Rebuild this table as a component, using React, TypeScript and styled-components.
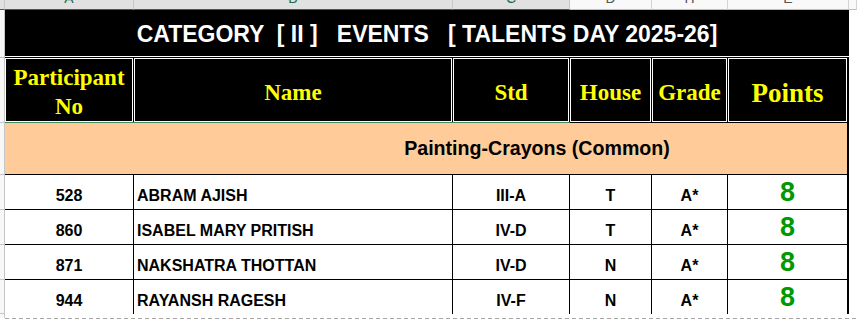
import styled, { createGlobalStyle } from "styled-components";

const GlobalStyle = createGlobalStyle`
  html, body {
    margin: 0;
    padding: 0;
    background: #ffffff;
  }
  body {
    font-family: "Liberation Sans", Arial, sans-serif;
    overflow: hidden;
  }
`;

// column widths incl. right border (A, B, C, D, H, E)
const COLS = [129, 319, 117, 82, 76, 121];
const LETTERS = ["A", "B", "C", "D", "H", "E"];
const SELECTED = 3; // A..C are selected in the sheet

const ROW_TICKS = [48, 65, 52, 35, 35, 35, 34];

const rows = [
  { no: "528", name: "ABRAM AJISH", std: "III-A", house: "T", grade: "A*", points: "8" },
  { no: "860", name: "ISABEL MARY PRITISH", std: "IV-D", house: "T", grade: "A*", points: "8" },
  { no: "871", name: "NAKSHATRA THOTTAN", std: "IV-D", house: "N", grade: "A*", points: "8" },
  { no: "944", name: "RAYANSH RAGESH", std: "IV-F", house: "N", grade: "A*", points: "8" },
];

const Sheet = styled.div`
  width: 857px;
  height: 319px;
  display: flex;
  flex-direction: column;
  overflow: hidden;
`;

const ColumnBar = styled.div`
  display: flex;
  height: 10px;
`;

const ColHead = styled.div<{ $w?: number; $active?: boolean; $grow?: boolean }>`
  box-sizing: border-box;
  width: ${(p) => (p.$w ? `${p.$w}px` : "auto")};
  flex: ${(p) => (p.$grow ? "1" : "none")};
  height: 10px;
  overflow: hidden;
  display: flex;
  align-items: flex-end;
  justify-content: center;
  padding-bottom: 4px;
  font-size: 14px;
  line-height: 14px;
  color: ${(p) => (p.$active ? "#1e6b41" : "#555555")};
  background: ${(p) => (p.$active ? "#e1e1e1" : "#f9f9f9")};
  border-right: 1px solid ${(p) => (p.$active ? "#c8c8c8" : "#d4d4d4")};
  border-bottom: 1px solid ${(p) => (p.$active ? "#217346" : "#bdbdbd")};
`;

const Corner = styled(ColHead)`
  width: 5px;
  border-bottom-color: #217346;
`;

const Body = styled.div`
  display: flex;
  flex: 1;
`;

const RowHeads = styled.div`
  box-sizing: border-box;
  width: 5px;
  display: flex;
  flex-direction: column;
  border-right: 1px solid #c6c6c6;
  background: #f7f7f7;
`;

const RowTick = styled.div<{ $h: number }>`
  box-sizing: border-box;
  height: ${(p) => p.$h}px;
  border-bottom: 1px solid #c6c6c6;
`;

const Table = styled.div`
  width: 844px;
  display: flex;
  flex-direction: column;
`;

const Title = styled.div`
  box-sizing: border-box;
  height: 47px;
  background: #000000;
  border-bottom: 1px solid #ffffff;
  display: flex;
  align-items: center;
  justify-content: center;
  color: #ffffff;
  font-weight: bold;
  font-size: 23px;
  white-space: pre;
  padding-top: 2px;
`;

const HeaderRow = styled.div`
  display: flex;
  height: 66px;
  background: #000000;
`;

const HeaderSlot = styled.div<{ $w: number; $active?: boolean; $last?: boolean }>`
  box-sizing: border-box;
  width: ${(p) => p.$w}px;
  padding: 1px ${(p) => (p.$last ? 2 : 1)}px 0 0;
  border-bottom: 1px solid ${(p) => (p.$active ? "#3f8a5c" : "#000000")};
  display: flex;
`;

const HeaderBox = styled.div<{ $big?: boolean }>`
  box-sizing: border-box;
  flex: 1;
  border: 1px solid #ffffff;
  display: flex;
  align-items: center;
  justify-content: center;
  text-align: center;
  color: #ffff00;
  font-family: "Liberation Serif", "Times New Roman", serif;
  font-weight: bold;
  font-size: ${(p) => (p.$big ? 27 : 23)}px;
  line-height: 29px;
  padding-top: ${(p) => (p.$big ? 6 : 4)}px;
`;

const CategoryRow = styled.div`
  box-sizing: border-box;
  height: 52px;
  background: #ffcc99;
  border-bottom: 1px solid #000000;
  border-right: 2px solid #000000;
  display: flex;
  align-items: center;
  justify-content: center;
  padding-left: 222px;
  font-weight: bold;
  font-size: 19.6px;
  color: #000000;
  white-space: pre;
`;

const DataRow = styled.div<{ $last?: boolean }>`
  box-sizing: border-box;
  height: ${(p) => (p.$last ? 34 : 35)}px;
  display: grid;
  grid-template-columns: ${COLS.map((c) => `${c}px`).join(" ")};
  border-bottom: ${(p) => (p.$last ? "none" : "1px solid #000000")};
`;

const Cell = styled.div<{ $align?: "left" | "center"; $last?: boolean }>`
  box-sizing: border-box;
  border-right: ${(p) => (p.$last ? 2 : 1)}px solid #000000;
  display: flex;
  align-items: flex-end;
  justify-content: ${(p) => (p.$align === "left" ? "flex-start" : "center")};
  padding: 0 0 4px ${(p) => (p.$align === "left" ? 3 : 0)}px;
  font-weight: bold;
  font-size: 16px;
  line-height: 18px;
  color: #000000;
`;

const PointsCell = styled(Cell)`
  align-items: center;
  padding: 0 0 1px;
  color: #009900;
  font-size: 27px;
  font-weight: bold;
  line-height: 30px;
`;

const PageBreak = styled.div`
  height: 1px;
  margin-left: 5px;
  background: repeating-linear-gradient(
    to right,
    #a6a6a6 0 4px,
    transparent 4px 7px
  );
`;

export default function App() {
  return (
    <Sheet>
      <GlobalStyle />
      <ColumnBar>
        <Corner $active />
        {LETTERS.map((l, i) => (
          <ColHead key={l} $w={COLS[i]} $active={i < SELECTED}>
            {l}
          </ColHead>
        ))}
        <ColHead $grow />
      </ColumnBar>
      <Body>
        <RowHeads>
          {ROW_TICKS.map((h, i) => (
            <RowTick key={i} $h={h} />
          ))}
        </RowHeads>
        <Table>
          <Title>{"CATEGORY  [ II ]   EVENTS   [ TALENTS DAY 2025-26]"}</Title>
          <HeaderRow>
            {["Participant No", "Name", "Std", "House", "Grade", "Points"].map((h, i) => (
              <HeaderSlot key={h} $w={COLS[i]} $active={i < SELECTED} $last={i === 5}>
                <HeaderBox $big={i === 5}>
                  {i === 0 ? (
                    <span>
                      Participant
                      <br />
                      No
                    </span>
                  ) : (
                    h
                  )}
                </HeaderBox>
              </HeaderSlot>
            ))}
          </HeaderRow>
          <CategoryRow>{"Painting-Crayons (Common)"}</CategoryRow>
          {rows.map((r, i) => (
            <DataRow key={r.no} $last={i === rows.length - 1}>
              <Cell>{r.no}</Cell>
              <Cell $align="left">{r.name}</Cell>
              <Cell>{r.std}</Cell>
              <Cell>{r.house}</Cell>
              <Cell>{r.grade}</Cell>
              <PointsCell $last>{r.points}</PointsCell>
            </DataRow>
          ))}
        </Table>
      </Body>
      <PageBreak />
    </Sheet>
  );
}
